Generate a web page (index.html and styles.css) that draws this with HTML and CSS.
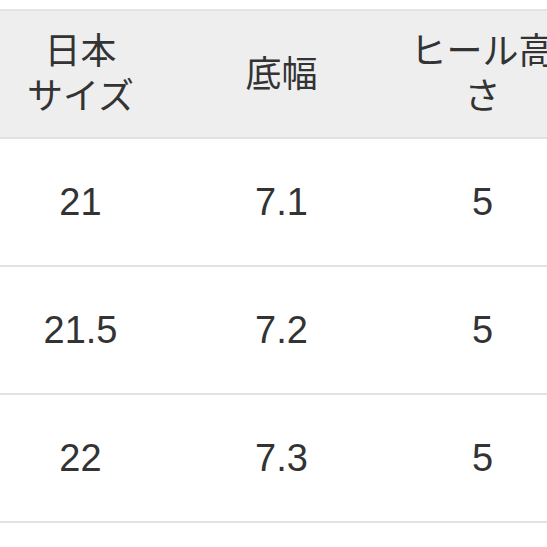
FILE: index.html
```html
<!DOCTYPE html>
<html lang="ja">
<head>
<meta charset="utf-8">
<title>サイズ表</title>
<link rel="stylesheet" href="styles.css">
</head>
<body>
<table class="size-table">
  <thead>
    <tr>
      <th>日本<br>サイズ</th>
      <th>底幅</th>
      <th>ヒール高<br>さ</th>
    </tr>
  </thead>
  <tbody>
    <tr><td>21</td><td>7.1</td><td>5</td></tr>
    <tr><td>21.5</td><td>7.2</td><td>5</td></tr>
    <tr><td>22</td><td>7.3</td><td>5</td></tr>
    <tr class="row-empty"><td></td><td></td><td></td></tr>
  </tbody>
</table>
</body>
</html>
```
FILE: styles.css
```css
html, body {
  margin: 0;
  padding: 0;
  background: #ffffff;
  overflow: hidden;
  width: 547px;
  height: 547px;
}

.size-table {
  margin-top: 9px;
  margin-left: -20px;
  border-collapse: collapse;
  table-layout: fixed;
  width: 603px;
  font-family: "Liberation Sans", "Noto Sans CJK JP", sans-serif;
  font-size: 38px;
  color: #333333;
  border-top: 2px solid #e4e4e4;
}

.size-table th,
.size-table td {
  width: 185px;
  height: 126px;
  padding: 0 8px;
  text-align: center;
  vertical-align: middle;
  border-bottom: 2px solid #e2e2e2;
  box-sizing: content-box;
  white-space: nowrap;
}

.size-table th {
  font-weight: normal;
  background: #eeeeee;
  line-height: 45px;
  font-size: 36px;
}

.size-table td {
  line-height: 45px;
}
```
